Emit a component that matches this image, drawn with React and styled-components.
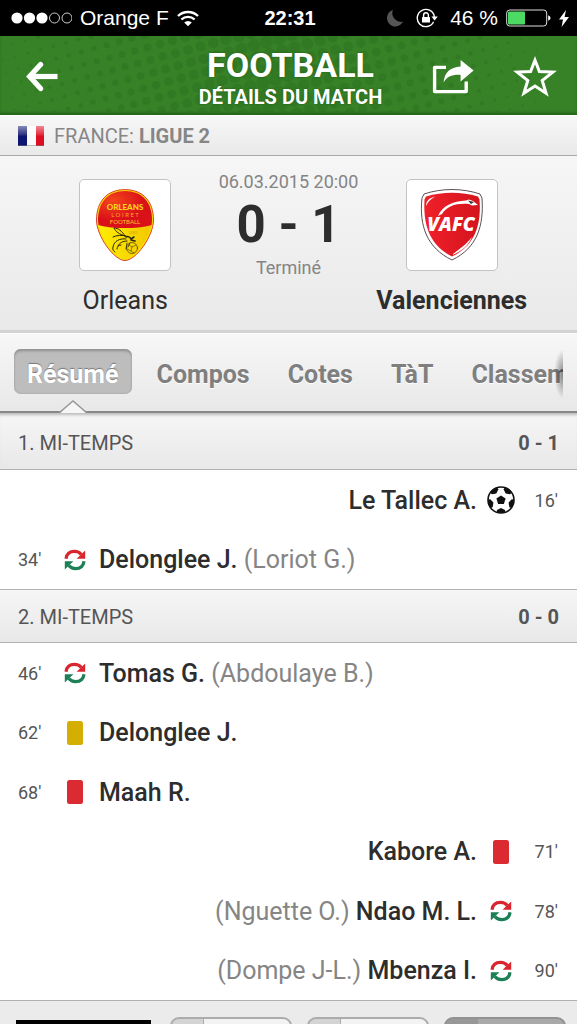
import React, { useState } from 'react'
import styled, { createGlobalStyle } from 'styled-components'

const GlobalStyle = createGlobalStyle`
  * {
    box-sizing: border-box;
  }
  body {
    margin: 0;
    background: #fff;
    color: #2d2d2d;
    font-family: Roboto, "Liberation Sans", sans-serif;
  }
  button {
    margin: 0;
    padding: 0;
    border: 0;
    background: none;
    font: inherit;
    color: inherit;
    cursor: pointer;
  }
  svg {
    display: block;
    flex: none;
  }
`

const Page = styled.div`
  height: 100vh;
  overflow: hidden;
`

const StatusBar = styled.div`
  display: grid;
  grid-template-columns: 1fr auto 1fr;
  align-items: center;
  height: 36px;
  padding: 0 8px 0 11px;
  background: #000;
  color: #fff;
  font: 21px/36px "Liberation Sans", Arial, sans-serif;
`

const StatusGroup = styled.div`
  display: flex;
  align-items: center;
  justify-content: ${(p) => (p.$end ? 'flex-end' : 'flex-start')};
  gap: ${(p) => (p.$wide ? '12px' : '8px')};
  white-space: pre;
`

const Clock = styled.time`
  font-size: 20px;
  font-weight: 700;
`

const Header = styled.header`
  position: relative;
  display: grid;
  grid-template-columns: 1fr auto 1fr;
  align-items: center;
  height: 79px;
  padding: 0 20px 0 24px;
  background: #378127;
  color: #fff;
  box-shadow: inset 0 -3px 3px -1px rgba(0, 50, 0, 0.4);
`

const HeaderDots = styled.svg`
  position: absolute;
  inset: 0;
  width: 100%;
  height: 100%;
`

const Titles = styled.div`
  position: relative;
  padding-top: 6px;
  text-align: center;
  text-shadow: 0 0 2px #1d5513;
`

const Title = styled.h1`
  margin: 0;
  font-size: 34px;
  line-height: 36px;
  font-weight: 700;
`

const Subtitle = styled.p`
  margin: 0;
  font-size: 20px;
  line-height: 28px;
  font-weight: 700;
`

const HeaderActions = styled.div`
  position: relative;
  display: flex;
  align-items: center;
  justify-content: ${(p) => (p.$end ? 'flex-end' : 'flex-start')};
  gap: 39px;
`

const LeagueBar = styled.div`
  display: flex;
  align-items: center;
  gap: 10px;
  height: 41px;
  padding: 0 18px;
  border-top: 1px solid #fff;
  border-bottom: 1px solid #aaa;
  background: linear-gradient(#f7f7f7, #e9e9e9);
  color: #868686;
  font-size: 20px;
`

const MatchPanel = styled.section`
  display: grid;
  grid-template-columns: 1fr 140px 1fr;
  height: 177px;
  padding: 23px 14px 0;
  border-bottom: 3px solid #d2d2d2;
  background: linear-gradient(#f6f6f6, #e9e9e9);
`

const Team = styled.div`
  display: flex;
  flex-direction: column;
  align-items: center;
  gap: 15px;
  padding: ${(p) => (p.$away ? '0 18px 0 0' : '0 0 0 18px')};
  font-size: 25px;
  line-height: 30px;
  font-weight: ${(p) => (p.$away ? 700 : 400)};
`

const Crest = styled.div`
  width: 92px;
  height: 92px;
  border: 1px solid #c3c3c3;
  border-radius: 5px;
  background: #fff;
`

const Result = styled.div`
  text-align: center;
  white-space: nowrap;
  color: #848484;
`

const MatchInfo = styled.div`
  font-size: 18px;
  line-height: 22px;
  margin-top: ${(p) => (p.$top ? '-8px' : 0)};
`

const Score = styled.div`
  padding: 2px 0;
  color: #2d2d2d;
  font-size: 51px;
  line-height: 60px;
  font-weight: 700;
`

const Tabs = styled.nav`
  height: 80px;
  padding: 15px 14px 0;
  border-top: 1px solid #fff;
  border-bottom: 2px solid #888;
  background: linear-gradient(#f7f7f7, #e8e8e8);
`

const TabStrip = styled.div`
  position: relative;
  display: flex;
  gap: 12px;
  height: 64px;
  overflow: hidden;

  &::after {
    content: '';
    position: absolute;
    right: 0;
    top: 0;
    width: 9px;
    height: 50px;
    background: radial-gradient(ellipse at right, rgba(0, 0, 0, 0.45), transparent 70%);
  }
`

const Tab = styled.button`
  position: relative;
  flex: none;
  height: 45px;
  padding: 5px 13px 0;
  border-radius: 7px;
  color: ${(p) => (p.$active ? '#fff' : '#7f7f7f')};
  background: ${(p) => (p.$active ? '#bdbdbd' : 'transparent')};
  box-shadow: ${(p) => (p.$active ? 'inset 0 3px 3px -1px #8f8f8f, inset 0 0 2px #999' : 'none')};
  text-shadow: ${(p) => (p.$active ? '0 -1px 1px #777' : '0 1px 0 #fff')};
  font-size: 25px;
  font-weight: 700;
`

const Notch = styled.svg`
  position: absolute;
  left: 50%;
  top: 51px;
  margin-left: -14px;
`

const PeriodBar = styled.h2`
  display: flex;
  justify-content: space-between;
  align-items: center;
  height: ${(p) => (p.$first ? '57px' : '54px')};
  margin: 0;
  padding: ${(p) => (p.$first ? '3px 18px 0' : '1px 18px 0')};
  border-top: ${(p) => (p.$first ? '0' : '1px solid #b4b4b4')};
  border-bottom: 1px solid #b0b0b0;
  background: linear-gradient(#f6f6f6, #e8e8e8);
  box-shadow: ${(p) => (p.$first ? 'inset 0 4px 3px -2px #bbb' : 'none')};
  color: #555;
  font-size: 20px;
  font-weight: 400;
`

const Events = styled.ul`
  margin: 0;
  padding: 0;
  list-style: none;
`

const Event = styled.li`
  display: flex;
  flex-direction: ${(p) => (p.$away ? 'row-reverse' : 'row')};
  align-items: center;
  height: 59px;
  padding: 0 19px 0 18px;

  &:nth-child(odd) {
    height: 60px;
  }
`

const Minute = styled.span`
  width: 42px;
  color: #555;
  font-size: 18px;
  text-align: ${(p) => (p.$away ? 'right' : 'left')};
`

const EventIcon = styled.span`
  display: flex;
  justify-content: center;
  width: 30px;
  margin: ${(p) => (p.$away ? '0 0 0 9px' : '0 9px 0 0')};
`

const Player = styled.span`
  font-size: 25px;
  font-weight: 500;
  white-space: nowrap;
`

const Replaced = styled.span`
  color: #858585;
  font-weight: 400;
`

const OddsBar = styled.section`
  display: grid;
  grid-template-columns: 135px repeat(3, 1fr);
  column-gap: 15px;
  height: 90px;
  padding: 16px 11px 0 16px;
  border-top: 1px solid #b0b0b0;
  background: #ebebeb;
`

const Bookmaker = styled.div`
  height: 60px;
  margin-top: 3px;
  background: #000;
`

const Odds = styled.div`
  display: grid;
  grid-column: 2 / -1;
  grid-template-columns: repeat(3, 1fr);
  column-gap: 15px;
  padding-left: 4px;
`

const Odd = styled.button`
  height: 60px;
  border: 2px solid ${(p) => (p.$picked ? '#929292' : '#acacac')};
  border-radius: 9px;
  background: ${(p) =>
    p.$picked
      ? 'linear-gradient(90deg, #989898 32px, #a9a9a9 32px)'
      : 'linear-gradient(90deg, #d4d4d4 31px, #acacac 31px, #acacac 32px, #f3f3f3 32px)'};
`

function Signal() {
  return (
    <svg width="61" height="12" viewBox="0 0 61 12">
      {[0, 1, 2, 3, 4].map((i) => (
        <circle
          key={i}
          cx={6 + i * 12.5}
          cy="6"
          r={i < 3 ? 5.6 : 5}
          fill={i < 3 ? '#fff' : 'none'}
          stroke="#ccc"
          strokeWidth={i < 3 ? 0 : 1}
        />
      ))}
    </svg>
  )
}

function Wifi() {
  return (
    <svg width="22" height="17" viewBox="0 0 22 17" fill="none" stroke="#fff" strokeWidth="2.4">
      <path d="M1 6a14.4 14.4 0 0 1 20 0M4.4 9.5a9.5 9.5 0 0 1 13.2 0" />
      <path d="M7.2 12.4a5.5 5.5 0 0 1 7.6 0L11 16.2z" fill="#fff" stroke="none" />
    </svg>
  )
}

function Moon() {
  return (
    <svg width="18" height="18" viewBox="0 0 18 18">
      <path d="M7 1A8.4 8.4 0 1 0 17 12.6 8.6 8.6 0 0 1 7 1z" fill="#555" />
    </svg>
  )
}

function RotationLock() {
  return (
    <svg width="22" height="20" viewBox="0 0 22 20" fill="none" stroke="#fff" strokeWidth="1.4">
      <path d="M17.6 13.8A8.6 8.6 0 1 1 18.4 9" />
      <path d="M15.4 8.4h6.4l-3.2 4z" fill="#fff" stroke="none" />
      <rect x="6" y="9" width="8" height="5.6" rx=".6" fill="#fff" stroke="none" />
      <path d="M7.6 9V7.2a2.4 2.4 0 0 1 4.8 0V9" />
    </svg>
  )
}

function Battery() {
  return (
    <svg width="45" height="18" viewBox="0 0 45 18">
      <rect x=".7" y="1" width="40" height="16" rx="3" fill="none" stroke="#ddd" />
      <rect x="2" y="2.5" width="17" height="13" rx="1" fill="#4cd964" />
      <path d="M42.2 6.2q2.4 1 2.4 2.8t-2.4 2.8z" fill="#fff" />
    </svg>
  )
}

function Bolt() {
  return (
    <svg width="10" height="17" viewBox="0 0 10 17">
      <path d="M7 0 0 9.400h4L2.600 17 10 7H5.600z" fill="#fff" />
    </svg>
  )
}

// Halftone texture: dots grow towards the middle of the bar
const dots = []
for (let row = -14; row < 16; row++) {
  for (let col = -26; col < 27; col++) {
    const x = 288 + (col * 13 + row * 3) * 0.97
    const y = 40 + row * 12.5 - col * 3.4
    const r = 6.6 - Math.abs(x - 270) / 46
    if (y > -8 && y < 88 && r > 0.7) dots.push({ x, y, r })
  }
}

function Halftone() {
  return (
    <HeaderDots viewBox="0 0 577 79" preserveAspectRatio="xMidYMid slice" aria-hidden="true">
      <g fill="#2c6f20" opacity=".42">
        {dots.map((d, i) => (
          <circle key={i} cx={d.x} cy={d.y} r={d.r} />
        ))}
      </g>
    </HeaderDots>
  )
}

function BackArrow() {
  return (
    <svg width="36" height="32" viewBox="0 0 36 32" fill="none" stroke="#fff" strokeWidth="5.2">
      <path d="M33.500 16.500H7" strokeLinejoin="round" />
      <path d="M16.600 4.500 5.600 16.500l11 12" strokeLinecap="round" strokeLinejoin="miter" />
    </svg>
  )
}

function Share() {
  return (
    <svg width="42" height="36" viewBox="0 0 42 36">
      <path
        d="M14 9.400H2.600v24.200h31.600V23.400"
        fill="none"
        stroke="#fff"
        strokeWidth="3.4"
        strokeLinejoin="round"
      />
      <path d="M28.600 2 41.600 12.600 28.600 23.500v-6.600C20 16.500 15 18.600 11.600 24.600 12.200 14.600 18 9 28.600 8.400z" fill="#fff" />
    </svg>
  )
}

function Star() {
  return (
    <svg width="44" height="42" viewBox="0 0 44 42">
      <path
        d="M22 5.200l4.400 11.400 13.400.5-10.600 8.400 3.900 12.700L22 31l-11.100 7.200 3.900-12.700L4.200 17.100l13.400-.5z"
        fill="none"
        stroke="#fff"
        strokeWidth="3"
      />
    </svg>
  )
}

function FrenchFlag() {
  return (
    <svg width="26" height="20" viewBox="0 0 26 20">
      <defs>
        <linearGradient id="gloss" x2="0" y2="1">
          <stop offset="0" stopColor="#fff" stopOpacity=".5" />
          <stop offset=".45" stopColor="#fff" stopOpacity=".12" />
          <stop offset=".5" stopColor="#fff" stopOpacity="0" />
        </linearGradient>
      </defs>
      <path d="M0 0h9v20H0z" fill="#0c1570" />
      <path d="M9 0h9v20H9z" fill="#fafafa" />
      <path d="M18 0h8v20h-8z" fill="#df0d22" />
      <path d="M0 0h26v20H0z" fill="url(#gloss)" />
      <path d="M0 19.5h26" stroke="#777" strokeOpacity=".5" />
    </svg>
  )
}

function OrleansCrest() {
  return (
    <svg width="90" height="90" viewBox="1 1 90 90" fontFamily="Lato, sans-serif" textAnchor="middle">
      <defs>
        <clipPath id="egg">
          <path d="M46 12c17 0 27 11 27 29 0 15-17 39-27 39S19 56 19 41c0-18 10-29 27-29z" />
        </clipPath>
        <radialGradient id="orleansRed" cx=".3" cy=".3">
          <stop offset="0" stopColor="#f3451b" />
          <stop offset="1" stopColor="#da1119" />
        </radialGradient>
        <linearGradient id="orleansYellow">
          <stop offset="0" stopColor="#fff000" />
          <stop offset="1" stopColor="#f2c500" />
        </linearGradient>
      </defs>
      <path
        d="M46 10.600c18 0 28.500 12 28.500 30.400C74.500 57 57 81.500 46 81.500S17.500 57 17.500 41C17.500 22.600 28 10.600 46 10.600z"
        fill="#ffe100"
        stroke="#d8432c"
      />
      <g clipPath="url(#egg)">
        <path d="M16 10h60v72H16z" fill="url(#orleansYellow)" />
        <path d="M16 10h60v35c-9 3-20 4-30 4s-21-1-30-4z" fill="url(#orleansRed)" />
      </g>
      <text x="46" y="31" fontSize="8" fontWeight="900" fill="#ffd21a">ORLEANS</text>
      <text x="46" y="38" fontSize="6" fill="#ffa52a">L O I R E T</text>
      <text x="46" y="45" fontSize="6" fill="#ffc22a">FOOTBALL</text>
      <text x="54" y="55" fontSize="4" fill="#c79c00">USO</text>
      <g fill="none" stroke="#29270c" strokeWidth="1" strokeLinecap="round">
        <path d="M46 57c-3-5-7-8-11-8 2 4 5 6 11 8zM47 57c-4-1-9-1-13 1" />
        <path d="M47 60c-6-1-12 2-13 8-1 3 1 4 2 5M48 62c-4 0-8 2-9 5M42 66c-3 0-4 2-4 4" />
        <path d="M47 58c2-1 4 0 5 2M52 60l3-2M52 61l4 1" strokeWidth="1.6" />
        <path d="M48 64l-1 6M51 64l-2 4" strokeWidth=".8" />
        <circle cx="53" cy="69" r="5.500" strokeWidth=".6" />
        <path d="M50 66l3 2 4-2M53 68l-1 4 3 2M48 70l4 2" strokeWidth=".5" />
      </g>
    </svg>
  )
}

function ValenciennesCrest() {
  return (
    <svg width="90" height="90" viewBox="1 1 90 90">
      <defs>
        <linearGradient id="vafcRed">
          <stop offset="0" stopColor="#f0202a" />
          <stop offset="1" stopColor="#d3141d" />
        </linearGradient>
      </defs>
      <path
        d="M18 15c18-6 38-6 56 0l2 4c2 28-5 50-30 62C21 69 13 47 16 19z"
        fill="#fff"
        stroke="#5e5050"
      />
      <path d="M20 17.500c17-5 35-5 52 0l1.500 3c2 26-5 46-27.500 57C23.500 66 17 46 18.500 20.500z" fill="url(#vafcRed)" />
      <path d="M20 27c0-5 3-8 9-9.500-4 2.500-7 5-9 9.500z" fill="#fff" />
      <path d="M32 37c4-10 15-15 28-15.500l3-1 4 1.500 5 4-6 .5-3-1.500c-13-1-22 2-27 10z" fill="#fff" />
      <path d="M62 21.500l6 1.500-3 2z" fill="#333" />
      <path d="M46 76c9-3 17-10 20-18-6 8-13 12-20 18z" fill="#fff" />
      <text
        x="45"
        y="52"
        fontFamily="Open Sans, sans-serif"
        fontSize="19"
        fontWeight="800"
        fontStyle="italic"
        textAnchor="middle"
        fill="#fff"
      >
        VAFC
      </text>
    </svg>
  )
}

function BallIcon() {
  return (
    <svg width="30" height="30" viewBox="0 0 30 30">
      <defs>
        <clipPath id="ball">
          <circle cx="15" cy="15" r="13" />
        </clipPath>
      </defs>
      <circle cx="15" cy="15" r="13" fill="#fff" />
      <g clipPath="url(#ball)" fill="#111">
        {[36, 108, 180, 252, 324].map((a) => (
          <path key={a} d="M10 0h10l-1 5-4 2-4-2z" transform={`rotate(${a} 15 15)`} />
        ))}
      </g>
      <path d="M15 10.400l4.600 3.200-1.700 5.400h-5.800l-1.700-5.400z" fill="#111" />
      <circle cx="15" cy="15" r="13" fill="none" stroke="#111" strokeWidth="1.600" />
    </svg>
  )
}

function SubstitutionIcon() {
  return (
    <svg width="22" height="22" viewBox="0 0 22 22" fill="none" strokeWidth="3.2">
      <path d="M2 9.800C2.600 5 6 2.400 10.600 2.400c3 0 5.200 1.200 6.600 3" stroke="#d9262e" />
      <path d="M21.200 1.400v8.400h-8.600z" fill="#d9262e" />
      <path d="M20 12.200C19.400 17 16 19.600 11.400 19.600c-3 0-5.200-1.200-6.600-3" stroke="#1d7f56" />
      <path d="M.8 20.600v-8.400h8.600z" fill="#1d7f56" />
    </svg>
  )
}

function CardIcon({ color }) {
  return (
    <svg width="16" height="24" viewBox="0 0 16 24">
      <rect width="16" height="24" rx="2.500" fill={color} />
    </svg>
  )
}

const icons = {
  goal: <BallIcon />,
  sub: <SubstitutionIcon />,
  yellow: <CardIcon color="#d4ae02" />,
  red: <CardIcon color="#db2a31" />,
}

const tabs = ['Résumé', 'Compos', 'Cotes', 'TàT', 'Classement']

const periods = [
  {
    name: '1. MI-TEMPS',
    score: '0 - 1',
    events: [
      { minute: 16, type: 'goal', player: 'Le Tallec A.', away: true },
      { minute: 34, type: 'sub', player: 'Delonglee J.', replaced: '(Loriot G.)' },
    ],
  },
  {
    name: '2. MI-TEMPS',
    score: '0 - 0',
    events: [
      { minute: 46, type: 'sub', player: 'Tomas G.', replaced: '(Abdoulaye B.)' },
      { minute: 62, type: 'yellow', player: 'Delonglee J.' },
      { minute: 68, type: 'red', player: 'Maah R.' },
      { minute: 71, type: 'red', player: 'Kabore A.', away: true },
      { minute: 78, type: 'sub', player: 'Ndao M. L.', replaced: '(Nguette O.)', away: true },
      { minute: 90, type: 'sub', player: 'Mbenza I.', replaced: '(Dompe J-L.)', away: true },
    ],
  },
]

function EventRow({ event }) {
  const { minute, type, player, replaced, away } = event

  return (
    <Event $away={away}>
      <Minute $away={away}>{minute}'</Minute>
      <EventIcon $away={away}>{icons[type]}</EventIcon>
      <Player>
        {away && replaced && <Replaced>{replaced} </Replaced>}
        {player}
        {!away && replaced && <Replaced> {replaced}</Replaced>}
      </Player>
    </Event>
  )
}

function App() {
  const [active, setActive] = useState('Résumé')

  return (
    <>
      <GlobalStyle />
      <Page>
        <StatusBar>
          <StatusGroup>
            <Signal />
            <span>Orange F</span>
            <Wifi />
          </StatusGroup>
          <Clock>22:31</Clock>
          <StatusGroup $end $wide>
            <Moon />
            <RotationLock />
            <StatusGroup>
              <span>46 %</span>
              <Battery />
              <Bolt />
            </StatusGroup>
          </StatusGroup>
        </StatusBar>

        <Header>
          <Halftone />
          <HeaderActions>
            <button aria-label="Retour"><BackArrow /></button>
          </HeaderActions>
          <Titles>
            <Title>FOOTBALL</Title>
            <Subtitle>DÉTAILS DU MATCH</Subtitle>
          </Titles>
          <HeaderActions $end>
            <button aria-label="Partager"><Share /></button>
            <button aria-label="Favori"><Star /></button>
          </HeaderActions>
        </Header>

        <LeagueBar>
          <FrenchFlag />
          <span>FRANCE: <b>LIGUE 2</b></span>
        </LeagueBar>

        <MatchPanel>
          <Team>
            <Crest><OrleansCrest /></Crest>
            Orleans
          </Team>
          <Result>
            <MatchInfo $top>06.03.2015 20:00</MatchInfo>
            <Score>0 - 1</Score>
            <MatchInfo>Terminé</MatchInfo>
          </Result>
          <Team $away>
            <Crest><ValenciennesCrest /></Crest>
            Valenciennes
          </Team>
        </MatchPanel>

        <Tabs>
          <TabStrip>
            {tabs.map((tab) => (
              <Tab key={tab} $active={tab === active} onClick={() => setActive(tab)}>
                {tab}
                {tab === active && (
                  <Notch width="28" height="13" viewBox="0 0 28 13">
                    <path d="M1 13 14 1l13 12z" fill="#f6f6f6" />
                    <path d="M0 13 14 1l14 12" fill="none" stroke="#999" strokeWidth="1.500" />
                  </Notch>
                )}
              </Tab>
            ))}
          </TabStrip>
        </Tabs>

        {periods.map((period, i) => (
          <section key={period.name}>
            <PeriodBar $first={i === 0}>
              {period.name}
              <b>{period.score}</b>
            </PeriodBar>
            <Events>
              {period.events.map((event) => (
                <EventRow key={event.minute} event={event} />
              ))}
            </Events>
          </section>
        ))}

        <OddsBar>
          <Bookmaker />
          <Odds>
            <Odd aria-label="1" />
            <Odd aria-label="X" />
            <Odd aria-label="2" $picked />
          </Odds>
        </OddsBar>
      </Page>
    </>
  )
}

export default App
